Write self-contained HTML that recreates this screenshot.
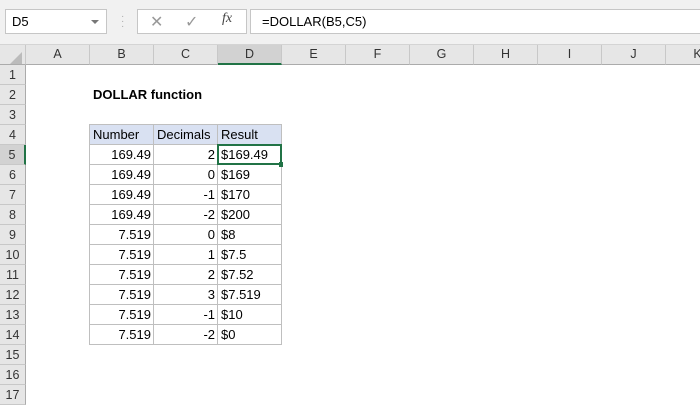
<!DOCTYPE html>
<html><head><style>
*{margin:0;padding:0;box-sizing:border-box}
body{width:700px;height:400px;overflow:hidden;background:#fff;font-family:"Liberation Sans",sans-serif;position:relative}
.tb{position:absolute;left:0;top:0;width:700px;height:45px;background:#f1f1f1;border-bottom:1px solid #d4d4d4}
.box{position:absolute;background:#fff;border:1px solid #c6c6c6}
.ch{position:absolute;top:45px;height:20px;background:#e6e6e6;border-bottom:1px solid #ababab;border-right:1px solid #c8c8c8;font-size:12.5px;color:#333;text-align:center;line-height:19px}
.rh{position:absolute;left:0;width:26px;height:20px;background:#e6e6e6;border-right:1px solid #ababab;border-bottom:1px solid #c8c8c8;font-size:12.5px;color:#333;text-align:center;line-height:20px}
.c{position:absolute;height:20px;font-size:13px;line-height:20px;color:#000;padding:0 3px;white-space:nowrap}
.r{text-align:right}
</style></head><body>
<div class="tb"></div>
<div class="box" style="left:5px;top:9px;width:102px;height:25px;font-size:13px;line-height:23px;padding-left:6px">D5</div>
<div style="position:absolute;left:91px;top:20px;width:0;height:0;border-left:4px solid transparent;border-right:4px solid transparent;border-top:4px solid #777"></div>
<div style="position:absolute;left:121px;top:14px;color:#aaa;font-size:10px;line-height:5px">·<br>·<br>·</div>
<div class="box" style="left:137px;top:9px;width:110px;height:25px"></div>
<div style="position:absolute;left:150px;top:12px;color:#999;font-size:16px">✕</div>
<div style="position:absolute;left:185px;top:12px;color:#999;font-size:16px">✓</div>
<div style="position:absolute;left:222px;top:11px;color:#444;font-size:14px;font-style:italic;font-family:'Liberation Serif',serif">fx</div>
<div class="box" style="left:250px;top:9px;width:455px;height:25px;font-size:13px;line-height:23px;padding-left:11px">=DOLLAR(B5,C5)</div>
<div class="ch" style="left:0;width:26px"></div>
<div style="position:absolute;left:10px;top:52px;width:0;height:0;border-left:12px solid transparent;border-bottom:12px solid #bbb"></div>
<div class="ch" style="left:26px;width:64px">A</div>
<div class="ch" style="left:90px;width:64px">B</div>
<div class="ch" style="left:154px;width:64px">C</div>
<div class="ch" style="left:218px;width:64px;background:#d2d2d2;border-bottom:2px solid #217346">D</div>
<div class="ch" style="left:282px;width:64px">E</div>
<div class="ch" style="left:346px;width:64px">F</div>
<div class="ch" style="left:410px;width:64px">G</div>
<div class="ch" style="left:474px;width:64px">H</div>
<div class="ch" style="left:538px;width:64px">I</div>
<div class="ch" style="left:602px;width:64px">J</div>
<div class="ch" style="left:666px;width:64px">K</div>
<div class="rh" style="top:65px">1</div>
<div class="rh" style="top:85px">2</div>
<div class="rh" style="top:105px">3</div>
<div class="rh" style="top:125px">4</div>
<div class="rh" style="top:145px;background:#d2d2d2;border-right:2px solid #217346">5</div>
<div class="rh" style="top:165px">6</div>
<div class="rh" style="top:185px">7</div>
<div class="rh" style="top:205px">8</div>
<div class="rh" style="top:225px">9</div>
<div class="rh" style="top:245px">10</div>
<div class="rh" style="top:265px">11</div>
<div class="rh" style="top:285px">12</div>
<div class="rh" style="top:305px">13</div>
<div class="rh" style="top:325px">14</div>
<div class="rh" style="top:345px">15</div>
<div class="rh" style="top:365px">16</div>
<div class="rh" style="top:385px">17</div>
<div class="c" style="left:90px;top:85px;font-weight:bold">DOLLAR function</div>
<svg style="position:absolute;left:89px;top:124px" width="194" height="222">
<rect x="0.5" y="0.5" width="192" height="20" fill="#d9e1f2"/>
<g stroke="#bfbfbf" fill="none">
<path d="M0.5 0.5V220.5M64.5 0.5V220.5M128.5 0.5V220.5M192.5 0.5V220.5"/>
<path d="M0 0.5H193M0 20.5H193M0 40.5H193M0 60.5H193M0 80.5H193M0 100.5H193M0 120.5H193M0 140.5H193M0 160.5H193M0 180.5H193M0 200.5H193M0 220.5H193"/>
</g>
<rect x="129" y="21" width="63" height="19" fill="none" stroke="#217346" stroke-width="2"/>
<rect x="190" y="38" width="5" height="5" fill="#217346"/>
</svg>
<div class="c" style="left:90px;top:125px">Number</div>
<div class="c" style="left:154px;top:125px">Decimals</div>
<div class="c" style="left:218px;top:125px">Result</div>
<div class="c r" style="left:90px;top:145px;width:64px">169.49</div><div class="c r" style="left:154px;top:145px;width:64px">2</div><div class="c" style="left:218px;top:145px">$169.49</div>
<div class="c r" style="left:90px;top:165px;width:64px">169.49</div><div class="c r" style="left:154px;top:165px;width:64px">0</div><div class="c" style="left:218px;top:165px">$169</div>
<div class="c r" style="left:90px;top:185px;width:64px">169.49</div><div class="c r" style="left:154px;top:185px;width:64px">-1</div><div class="c" style="left:218px;top:185px">$170</div>
<div class="c r" style="left:90px;top:205px;width:64px">169.49</div><div class="c r" style="left:154px;top:205px;width:64px">-2</div><div class="c" style="left:218px;top:205px">$200</div>
<div class="c r" style="left:90px;top:225px;width:64px">7.519</div><div class="c r" style="left:154px;top:225px;width:64px">0</div><div class="c" style="left:218px;top:225px">$8</div>
<div class="c r" style="left:90px;top:245px;width:64px">7.519</div><div class="c r" style="left:154px;top:245px;width:64px">1</div><div class="c" style="left:218px;top:245px">$7.5</div>
<div class="c r" style="left:90px;top:265px;width:64px">7.519</div><div class="c r" style="left:154px;top:265px;width:64px">2</div><div class="c" style="left:218px;top:265px">$7.52</div>
<div class="c r" style="left:90px;top:285px;width:64px">7.519</div><div class="c r" style="left:154px;top:285px;width:64px">3</div><div class="c" style="left:218px;top:285px">$7.519</div>
<div class="c r" style="left:90px;top:305px;width:64px">7.519</div><div class="c r" style="left:154px;top:305px;width:64px">-1</div><div class="c" style="left:218px;top:305px">$10</div>
<div class="c r" style="left:90px;top:325px;width:64px">7.519</div><div class="c r" style="left:154px;top:325px;width:64px">-2</div><div class="c" style="left:218px;top:325px">$0</div>
</body></html>
